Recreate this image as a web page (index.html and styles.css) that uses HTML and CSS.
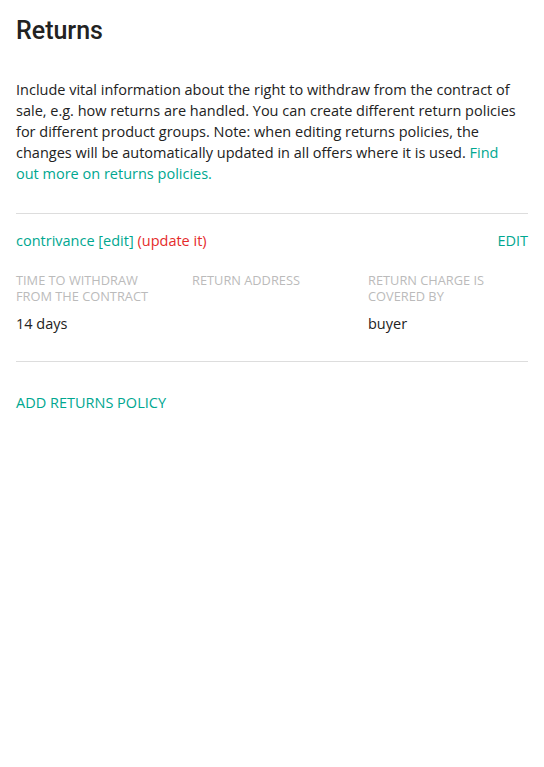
FILE: index.html
```html
<!DOCTYPE html>
<html lang="en">
<head>
<meta charset="utf-8">
<title>Returns</title>
<link rel="stylesheet" href="styles.css">
</head>
<body>
<main class="page">
  <h1 class="title">Returns</h1>
  <p class="intro">Include vital information about the right to withdraw from the contract of sale, e.g. how returns are handled. You can create different return policies for different product groups. Note: when editing returns policies, the changes will be automatically updated in all offers where it is used. <a class="link" href="#">Find out more on returns policies.</a></p>
  <section class="policy">
    <div class="policy-head">
      <div class="policy-name"><a class="link" href="#">contrivance [edit]</a> <span class="warn">(update it)</span></div>
      <a class="link edit" href="#">EDIT</a>
    </div>
    <div class="fields">
      <div class="field">
        <div class="label">TIME TO WITHDRAW FROM THE CONTRACT</div>
        <div class="value">14 days</div>
      </div>
      <div class="field">
        <div class="label">RETURN ADDRESS</div>
        <div class="value"></div>
      </div>
      <div class="field">
        <div class="label">RETURN CHARGE IS COVERED BY</div>
        <div class="value">buyer</div>
      </div>
    </div>
  </section>
  <a class="link add" href="#">ADD RETURNS POLICY</a>
</main>
</body>
</html>
```

FILE: styles.css
```css
html, body {
  margin: 0;
  padding: 0;
  background: #fff;
}
body {
  font-family: "Open Sans", "Liberation Sans", sans-serif;
  color: #222;
}
.page {
  padding: 14px 16px 0;
}
.title {
  font-family: Roboto, "Liberation Sans", sans-serif;
  font-weight: 500;
  font-size: 25px;
  line-height: 34px;
  margin: 0;
  color: #222;
}
.intro {
  margin: 31px 0 0;
  padding-right: 8px;
  font-size: 14.5px;
  line-height: 21px;
  color: #222;
}
.link {
  color: #00a790;
  text-decoration: none;
}
.warn {
  color: #e52b2b;
}
.policy {
  margin-top: 29px;
  border-top: 1px solid #ddd;
  border-bottom: 1px solid #ddd;
  padding: 16px 0 27px;
}
.policy-head {
  display: flex;
  justify-content: space-between;
  align-items: center;
  font-size: 14.5px;
  line-height: 22px;
}
.fields {
  display: grid;
  grid-template-columns: repeat(3, 1fr);
  column-gap: 16px;
  margin-top: 20px;
}
.label {
  font-size: 12.8px;
  line-height: 16px;
  color: #bbb;
  max-width: 150px;
}
.value {
  margin-top: 9px;
  font-size: 14.5px;
  line-height: 21px;
  color: #222;
}
.add {
  display: block;
  margin-top: 30px;
  font-size: 14.5px;
  line-height: 21px;
}
```
